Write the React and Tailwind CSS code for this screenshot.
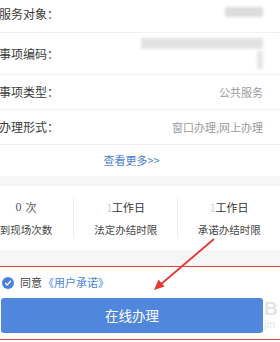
import React from "react";

const font = { fontFamily: '"Noto Sans CJK SC", "Noto Sans", sans-serif' };

function Row({ label, children, h = "h-[35px]" }) {
  return (
    <div className={`flex items-center justify-between ${h} border-b border-[#f1f1f1]`}>
      <span className="text-[12px] text-[#3a3a3a] ml-[-1px] leading-none">{label}</span>
      <div className="pr-[17px] flex items-center">{children}</div>
    </div>
  );
}

export default function App() {
  return (
    <div className="relative w-[280px] h-[342px] bg-white overflow-hidden" style={font}>
      <div className="flex flex-col mt-[-4px]">
        <Row label="服务对象：" h="h-[37px]">
          <div className="w-[38px] h-[10px] bg-[#dcdcdc] blur-[1.5px] mb-[4px]" />
        </Row>
        <Row label="事项编码：" h="h-[42px]">
          <div className="flex flex-col items-end">
            <div className="w-[122px] h-[11px] bg-[#e2e2e2] blur-[1.5px]" />
            <div className="w-[6px] h-[18px] bg-[#e6e6e6] blur-[1.5px] mt-[2px]" />
          </div>
        </Row>
        <Row label="事项类型：" h="h-[35px]">
          <span className="text-[11px] text-[#9a9a9a] leading-none">公共服务</span>
        </Row>
        <Row label="办理形式：" h="h-[35px]">
          <span className="text-[11px] text-[#9a9a9a] leading-none">窗口办理,网上办理</span>
        </Row>
        <div className="h-[31px] flex items-center justify-center pr-[17px]">
          <span className="text-[11px] text-[#4d7fd1] leading-none">查看更多&gt;&gt;</span>
        </div>
        <div className="h-[10px] bg-[#f6f6f6]" />
        <div className="h-[64px] flex items-center">
          <div className="w-[73px] pr-[21px] flex flex-col items-center whitespace-nowrap">
            <span className="text-[11px] text-[#555] leading-none h-[12px] flex items-end">
              <span style={{ fontFamily: '"Liberation Serif", serif' }} className="text-[12px]">0</span>
              <span className="ml-[4px]">次</span>
            </span>
            <span className="text-[10.5px] text-[#444] leading-none mt-[12px]">到现场次数</span>
          </div>
          <div className="w-px h-[40px] bg-[#eeeeee]" />
          <div className="w-[106px] flex flex-col items-center whitespace-nowrap">
            <span className="text-[11px] text-[#333] leading-none h-[12px] flex items-end">
              <span className="text-[#8fb8de] text-[10px] font-light">1</span>工作日
            </span>
            <span className="text-[10.5px] text-[#444] leading-none mt-[12px]">法定办结时限</span>
          </div>
          <div className="w-px h-[40px] bg-[#eeeeee]" />
          <div className="w-[104px] flex flex-col items-center whitespace-nowrap">
            <span className="text-[11px] text-[#333] leading-none h-[12px] flex items-end">
              <span className="text-[#8fb8de] text-[10px] font-light">1</span>工作日
            </span>
            <span className="text-[10.5px] text-[#444] leading-none mt-[12px]">承诺办结时限</span>
          </div>
        </div>
        <div className="h-[16px] bg-[#f6f6f6]" />
        <div className="border-y border-[#e8413a] h-[74px] flex flex-col">
          <div className="h-[31px] flex items-center pl-[2px]">
            <span className="w-[12px] h-[12px] rounded-full bg-[#4a7fdc] flex items-center justify-center">
              <svg width="8" height="8" viewBox="0 0 8 8">
                <path d="M1.5 4.2 L3.3 5.9 L6.5 2.3" stroke="white" strokeWidth="1.4" fill="none" strokeLinecap="round" strokeLinejoin="round" />
              </svg>
            </span>
            <span className="text-[11px] text-[#444] leading-none ml-[6px]">同意</span>
            <span className="text-[11px] text-[#4d86d8] leading-none ml-[1px]">《用户承诺》</span>
          </div>
          <div className="h-[35px] w-[262px] ml-[1px] bg-[#5087dc] rounded-[3px] flex items-center justify-center">
            <span className="text-[13.5px] text-white leading-none">在线办理</span>
          </div>
        </div>
      </div>

      <div className="absolute left-[264px] top-[299px] flex flex-col leading-none">
        <span className="text-[19px] font-bold text-[#e4e4e4]" style={{ fontFamily: '"Liberation Sans", sans-serif' }}>B</span>
        <span className="text-[11px] text-[#e4e4e4] mt-[1px]" style={{ fontFamily: '"Liberation Sans", sans-serif' }}>jin</span>
      </div>

      <svg className="absolute left-0 top-0 pointer-events-none" width="280" height="342">
        <line x1="214" y1="239" x2="160" y2="285" stroke="#e53935" strokeWidth="1.8" />
        <polygon points="154,290 158.5,279.5 164.5,286.5" fill="#e53935" />
      </svg>
    </div>
  );
}
